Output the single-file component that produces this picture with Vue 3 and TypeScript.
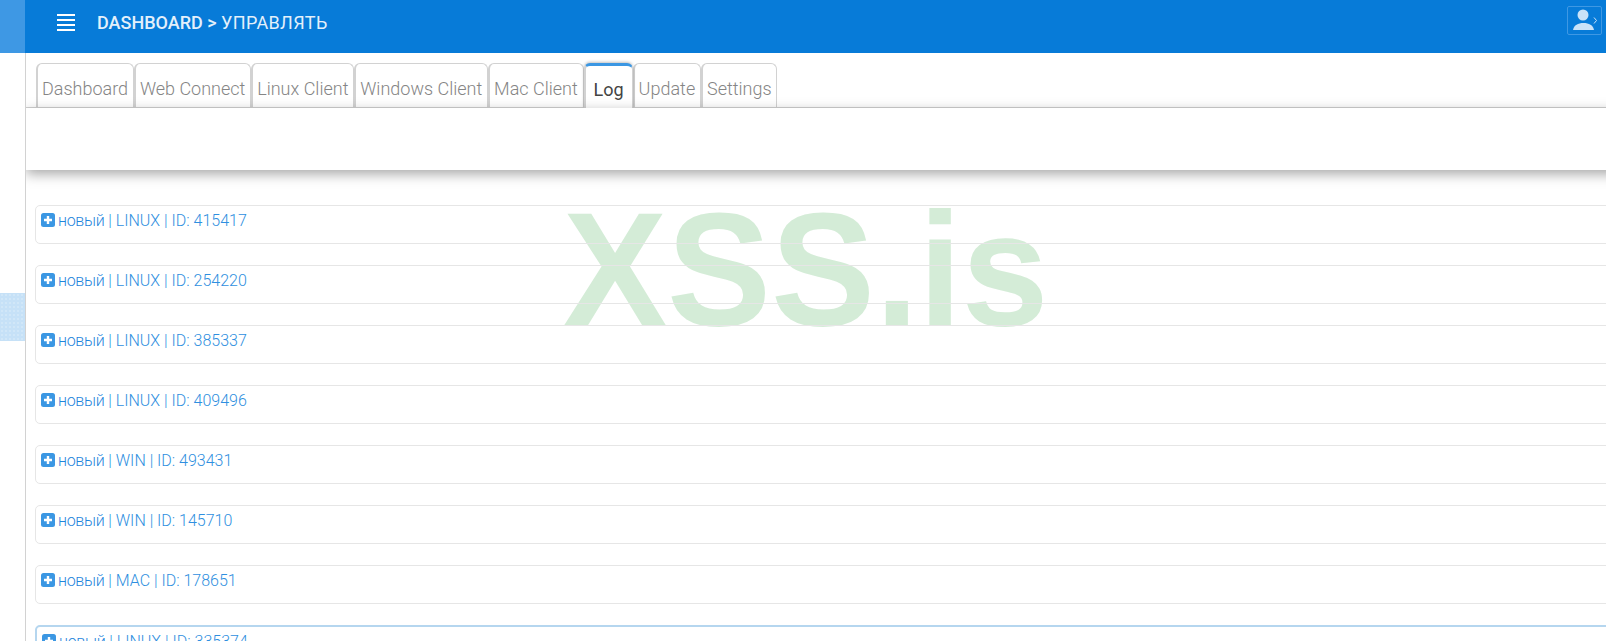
<template>
  <div class="layout">
    <aside class="sidebar">
      <div class="side-logo"></div>
      <div class="side-active"></div>
    </aside>

    <main class="main">
      <header class="topbar">
        <button class="burger" aria-label="menu">
          <svg width="18" height="17" viewBox="0 0 18 17">
            <path d="M0 1h18M0 6h18M0 11h18M0 16h18" stroke="#fff" stroke-width="2" />
          </svg>
        </button>
        <div class="crumbs"><b>DASHBOARD &gt;</b> <span>УПРАВЛЯТЬ</span></div>
        <button class="user-btn" aria-label="user">
          <svg width="33" height="27" viewBox="0 0 33 27">
            <circle cx="15" cy="8" r="5.5" fill="#c9e2f8" />
            <path d="M5 23c1-5 5-7 10.5-7s9.5 2 10.5 7z" fill="#c9e2f8" />
            <path d="M26 10.5l2.5 3-2.5 3" fill="none" stroke="#c9e2f8" stroke-width="1" />
          </svg>
        </button>
      </header>

      <div class="content">
        <nav class="tabs">
          <a v-for="t in tabs" :key="t" class="tab" :class="{ active: t === 'Log' }">{{ t }}</a>
        </nav>
        <section class="tab-panel"></section>

        <div class="rows">
          <div class="watermark">XSS.is</div>
          <div v-for="(r, i) in rows" :key="r.id" class="row" :class="{ focused: i === rows.length - 1 }">
            <svg class="plus" width="14" height="14" viewBox="0 0 14 14">
              <rect width="14" height="14" rx="2.5" fill="#3b97e3" />
              <path d="M7 3v8M3 7h8" stroke="#fff" stroke-width="2.4" />
            </svg>
            <span class="new">новый</span> | {{ r.os }} | ID: {{ r.id }}
          </div>
        </div>
      </div>
    </main>
  </div>
</template>

<script setup lang="ts">
const tabs = ['Dashboard', 'Web Connect', 'Linux Client', 'Windows Client', 'Mac Client', 'Log', 'Update', 'Settings']

const rows = [
  { os: 'LINUX', id: 415417 },
  { os: 'LINUX', id: 254220 },
  { os: 'LINUX', id: 385337 },
  { os: 'LINUX', id: 409496 },
  { os: 'WIN', id: 493431 },
  { os: 'WIN', id: 145710 },
  { os: 'MAC', id: 178651 },
  { os: 'LINUX', id: 335374 },
]
</script>

<style>
html, body { overflow: hidden; background: #fff; }
</style>

<style scoped>
.layout { display: flex; width: 1606px; height: 641px; overflow: hidden; font-family: Roboto, "Liberation Sans", sans-serif; background: #fff; }

.sidebar { width: 25px; flex: none; }
.side-logo { height: 53px; background: #3e98e4; }
.side-active { height: 48px; margin-top: 240px; background-color: #c6e1f7; background-image: radial-gradient(rgba(255, 255, 255, .4) .6px, transparent .8px); background-size: 4px 4px; }

.main { flex: 1; min-width: 0; }

.topbar { height: 53px; background: #077bd8; display: flex; align-items: center; padding-left: 32px; position: relative; }
.burger { padding: 0; border: none; background: none; display: flex; margin-bottom: 9px; }
.crumbs { margin-left: 22px; margin-bottom: 9px; font-size: 18px; color: #e3f0fb; }
.crumbs b { font-weight: 500; }
.crumbs span { letter-spacing: .35px; }
.user-btn { position: absolute; right: 4px; top: 6px; width: 35px; height: 29px; padding: 0; border: 1px solid #3e98e4; border-radius: 2px; background: none; }
.user-btn svg { display: block; }

.content { height: 588px; border-left: 1px solid #d2d2d2; overflow: hidden; }

.tabs { display: flex; padding: 10px 0 0 10px; border-bottom: 1px solid #d2d2d2; height: 44px; box-sizing: content-box; }
.tab { height: 44px; padding: 0 4.8px 0 4px; box-sizing: border-box; border: 1px solid #d2d2d2; border-bottom: none; border-left-width: 2px; border-radius: 6px 6px 0 0; font-size: 18px; font-weight: 300; line-height: 50px; color: #858585; background: #fff; }
.tab.active { color: #444; font-weight: 400; padding: 0 8px; border-top: 3px solid #3b97e3; height: 45px; line-height: 48px; box-shadow: 0 -1px 3px rgba(0, 0, 0, .25); position: relative; }

.tab-panel { height: 62px; margin-right: -30px; background: #fff; box-shadow: 0 4px 12px rgba(0, 0, 0, .35); position: relative; }

.rows { position: relative; padding: 35px 0 0 9px; margin-right: -12px; }
.row { height: 39px; box-sizing: border-box; margin-bottom: 21px; border: 1px solid #e6e6e6; border-radius: 5px; padding: 5px 0 0 5px; font-size: 16px; font-weight: 300; line-height: 20px; color: #2f8fe0; white-space: nowrap; position: relative; z-index: 1; }
.row.focused { border: 2px solid #b5d6ef; }
.plus { vertical-align: -1px; margin-right: 3px; }
.new { letter-spacing: -.3px; color: #1f86dc; }

.watermark { position: absolute; left: 537px; top: 0; font-family: "Liberation Sans", Arial, sans-serif; font-size: 156px; font-weight: 700; line-height: 156px; padding-top: 23px; color: rgba(70, 175, 80, .23); transform: scaleY(1.03); transform-origin: 0 155px; pointer-events: none; }
</style>
